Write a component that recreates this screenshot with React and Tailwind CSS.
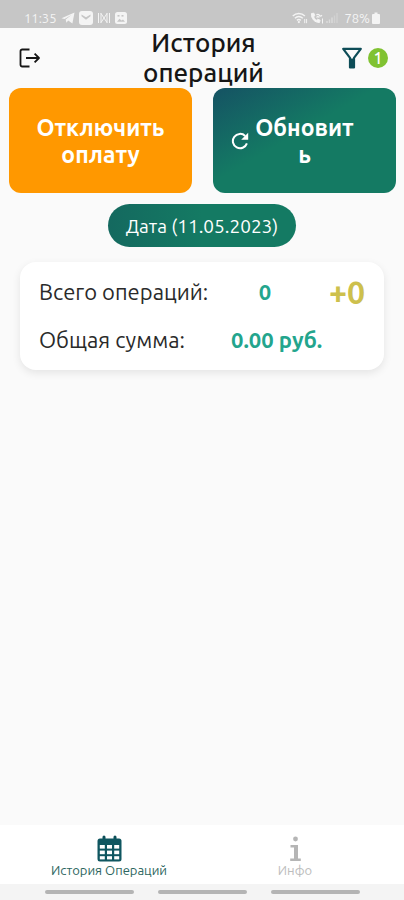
import React from 'react';
import { clsx } from 'clsx';

const TelegramIcon = () => (
  <svg viewBox="0 0 14 12" className="w-3.5 h-3 shrink-0" fill="currentColor" aria-hidden="true">
    <path d="M0.5 6.2 13.5 0.5 11.4 11.5 7.2 8.6 5.4 10.8 4.7 7.4 10.4 3 3.6 7Z" />
  </svg>
);

const MailIcon = () => (
  <svg viewBox="0 0 14 14" className="size-3.5 shrink-0" aria-hidden="true">
    <rect width="14" height="14" rx="3" fill="currentColor" />
    <path d="M2.5 3.5 7 6.2 11.5 3.5V5.2L7 8.8 2.5 5.2Z" fill="#c6c6c6" />
  </svg>
);

const NewsIcon = () => (
  <svg viewBox="0 0 14 12" className="w-3.5 h-3 shrink-0" fill="none" stroke="currentColor" strokeWidth="1" aria-hidden="true">
    <path d="M1.5 1v10M12.5 1v10M4 1.5 10 10.5M10 1.5 4 10.5M4 1v10M10 1v10" />
  </svg>
);

const PictureIcon = () => (
  <svg viewBox="0 0 12 12" className="size-3 shrink-0" aria-hidden="true">
    <rect width="12" height="12" rx="2.5" fill="currentColor" />
    <path d="M2 9.8 4.5 6.8 6.5 8.6 8 7.4 10 9.8Z" fill="#c6c6c6" />
    <rect x="2.5" y="3" width="2" height="1.6" fill="#c6c6c6" />
    <rect x="6.5" y="3" width="2" height="1.6" fill="#c6c6c6" />
  </svg>
);

const WifiIcon = () => (
  <svg viewBox="0 0 17 12" className="w-4 h-3 shrink-0" fill="none" stroke="currentColor" strokeWidth="1.5" aria-hidden="true">
    <path d="M0.8 4C4.5 0.4 10 0.4 13.7 4M3 6.3c2.5-2.3 6-2.3 8.5 0M5.2 8.5c1.3-1.1 2.8-1.1 4.1 0" />
    <circle cx="7.3" cy="10.3" r="1.2" fill="currentColor" stroke="none" />
    <path d="M13.5 7v4.5M15.5 7v4.5" strokeWidth="1" />
  </svg>
);

const CallIcon = () => (
  <svg viewBox="0 0 14 12" className="w-3.5 h-3 shrink-0" fill="none" stroke="currentColor" aria-hidden="true">
    <path d="M1.5 1.5C1 6.5 4.5 10.5 9.5 10.5l.6-2.3-2.5-1-1.2 1C5 7.3 4 5.8 3.7 4.8l1-1L3.9 1.2Z" fill="currentColor" />
    <path d="M6.5 3.2c.8-1.2 2-1.2 2.8 0s1.8 1.2 2.6 0M6.5 5.5c.8-1.2 2-1.2 2.8 0" strokeWidth="1.2" />
    <path d="M12.5 6.5v5" strokeWidth="1" />
  </svg>
);

const SignalIcon = () => (
  <svg viewBox="0 0 12 12" className="size-3 shrink-0" aria-hidden="true">
    <path d="M1 9v2M3.5 7.5V11M6 5.5V11" stroke="#dcdcdc" strokeWidth="1.4" />
    <path d="M8.5 3.5V11M11 1V11" stroke="#d2d2d2" strokeWidth="1.4" />
  </svg>
);

const BatteryIcon = () => (
  <svg viewBox="0 0 8 12" className="w-2 h-3 shrink-0" fill="currentColor" aria-hidden="true">
    <path d="M2.5 0.5h3V2H7a1 1 0 0 1 1 1v8a1 1 0 0 1-1 1H1a1 1 0 0 1-1-1V3a1 1 0 0 1 1-1h1.5Z" />
  </svg>
);

const LogoutIcon = () => (
  <svg viewBox="0 0 22 20" className="w-[22px] h-5" fill="none" stroke="#161616" strokeWidth="1.8" strokeLinejoin="round" aria-hidden="true">
    <path d="M10.5 1.5H3.2A1.7 1.7 0 0 0 1.5 3.2v13.6a1.7 1.7 0 0 0 1.7 1.7h7.3" />
    <path d="M7 10h13M15.6 5.6 20 10l-4.4 4.4" />
  </svg>
);

const FilterIcon = () => (
  <svg viewBox="0 0 20 22" className="w-5 h-[22px]" fill="none" stroke="#0d4c57" strokeWidth="2.2" strokeLinejoin="round" aria-hidden="true">
    <path d="M1.2 1.8h17.6L12 10.8v9.6H8v-9.6Z" />
    <path d="M10 11.5v9" strokeWidth="3" />
  </svg>
);

const ReloadIcon = () => (
  <svg viewBox="0 0 18 18" className="w-[18px] h-[18px] shrink-0" aria-hidden="true">
    <path d="M15.9 11.4A7.2 7.2 0 1 1 14.2 4" fill="none" stroke="currentColor" strokeWidth="2" />
    <path d="M17.2 0.8v7h-7Z" fill="currentColor" />
  </svg>
);

const CalendarIcon = () => (
  <svg viewBox="0 0 25 27" className="w-[25px] h-[27px]" aria-hidden="true">
    <path d="M7 2v4M18 2v4" stroke="#0d4f59" strokeWidth="3" strokeLinecap="round" />
    <rect x="0.5" y="3.5" width="24" height="23" rx="2.5" fill="#0f5660" />
    <g fill="#ffffff">
      <rect x="2.8" y="10" width="5" height="3.6" />
      <rect x="10" y="10" width="5" height="3.6" />
      <rect x="17.2" y="10" width="5" height="3.6" />
      <rect x="2.8" y="15.6" width="5" height="3.6" />
      <rect x="10" y="15.6" width="5" height="3.6" />
      <rect x="17.2" y="15.6" width="5" height="3.6" />
      <rect x="2.8" y="21.2" width="5" height="3.2" />
      <rect x="10" y="21.2" width="5" height="3.2" />
      <rect x="17.2" y="21.2" width="5" height="3.2" />
    </g>
  </svg>
);

const InfoIcon = () => (
  <svg viewBox="0 0 25 27" className="w-[25px] h-[27px]" fill="#b5b5b5" aria-hidden="true">
    <circle cx="12.5" cy="4" r="2.4" />
    <path d="M7.5 10H15v13.5h2.8V26H7.2v-2.5H11v-11H7.5Z" />
  </svg>
);

const tabs = [
  { key: 'history', label: 'История Операций', icon: CalendarIcon, active: true },
  { key: 'info', label: 'Инфо', icon: InfoIcon, active: false },
];

const StatusBar = () => (
  <div className="flex items-center justify-between h-7 pt-2 px-6 bg-[#c6c6c6] text-[#f4f4f4]">
    <div className="flex items-center gap-1">
      <span className="text-[13px] leading-4">11:35</span>
      <TelegramIcon />
      <MailIcon />
      <NewsIcon />
      <PictureIcon />
    </div>
    <div className="flex items-center gap-0.5">
      <WifiIcon />
      <CallIcon />
      <SignalIcon />
      <span className="pl-1 text-[13px] leading-4">78%</span>
      <BatteryIcon />
    </div>
  </div>
);

const Header = () => (
  <header className="grid grid-cols-[1fr_auto_1fr] items-center pl-[19px] pr-4">
    <button type="button" aria-label="Выйти" className="justify-self-start">
      <LogoutIcon />
    </button>
    <h1 className="w-36 text-center text-[26px] leading-[30px] font-medium text-[#161616]">
      История операций
    </h1>
    <button type="button" aria-label="Фильтр" className="flex items-center gap-1.5 justify-self-end">
      <FilterIcon />
      <span className="flex items-center justify-center size-5 rounded-full bg-[#80c232] text-white text-[16px] leading-5 font-medium">
        1
      </span>
    </button>
  </header>
);

const Summary = () => (
  <section className="mx-5 mt-[15px] px-[19px] py-3 rounded-2xl bg-white shadow-[0_3px_8px_rgba(0,0,0,0.09)] text-[22px] leading-9">
    <div className="flex items-center">
      <span className="w-44 text-[#2a2a2a]">Всего операций:</span>
      <span className="w-[100px] text-center font-bold text-[#23a58d]">0</span>
      <span className="flex-1 text-right text-[32px] font-bold text-[#cdc04d]">+0</span>
    </div>
    <div className="flex items-center mt-3">
      <span className="w-44 text-[#2a2a2a]">Общая сумма:</span>
      <span className="flex-1 pl-4 font-bold text-[#23a58d]">0.00 руб.</span>
    </div>
  </section>
);

const TabBar = () => (
  <nav className="grid grid-cols-2 px-4 pt-2.5 pb-1.5 bg-white">
    {tabs.map((tab) => (
      <a
        key={tab.key}
        href={`#${tab.key}`}
        className={clsx(
          'flex flex-col items-center text-[13px] leading-4',
          tab.active ? 'text-[#2d6660]' : 'text-[#bdbdbd]'
        )}
      >
        <tab.icon />
        <span>{tab.label}</span>
      </a>
    ))}
  </nav>
);

const App = () => {
  return (
    <div className="flex flex-col min-h-screen bg-[#fafafa] font-['Ubuntu','Noto_Sans',sans-serif]">
      <StatusBar />
      <Header />

      <main className="flex-1">
        <div className="grid grid-cols-2 gap-[21px] pl-[9px] pr-2">
          <button
            type="button"
            className="h-[105px] px-4 rounded-xl bg-[#ff9800] text-white text-[23px] leading-[27px] font-bold"
          >
            Отключить оплату
          </button>
          <button
            type="button"
            className="flex items-center justify-center gap-1 h-[105px] pl-[18px] pr-10 rounded-xl bg-linear-to-br from-[#155263] via-[#147a63] via-45% to-[#147a63] text-white text-[23px] leading-[27px] font-bold"
          >
            <ReloadIcon />
            <span className="min-w-0 break-all">Обновить</span>
          </button>
        </div>

        <div className="flex justify-center mt-[11px]">
          <button
            type="button"
            className="h-[43px] px-[18px] rounded-full bg-linear-to-r from-[#14695f] to-[#147a63] to-50% text-white text-[19px] leading-6"
          >
            Дата (11.05.2023)
          </button>
        </div>

        <Summary />
      </main>

      <TabBar />

      <div className="flex justify-center gap-6 py-1.5 bg-[#f4f4f4]">
        <span className="w-[89px] h-1 rounded-full bg-[#b4b4b4]" />
        <span className="w-[89px] h-1 rounded-full bg-[#b4b4b4]" />
        <span className="w-[89px] h-1 rounded-full bg-[#b4b4b4]" />
      </div>
    </div>
  );
};

export default App;
